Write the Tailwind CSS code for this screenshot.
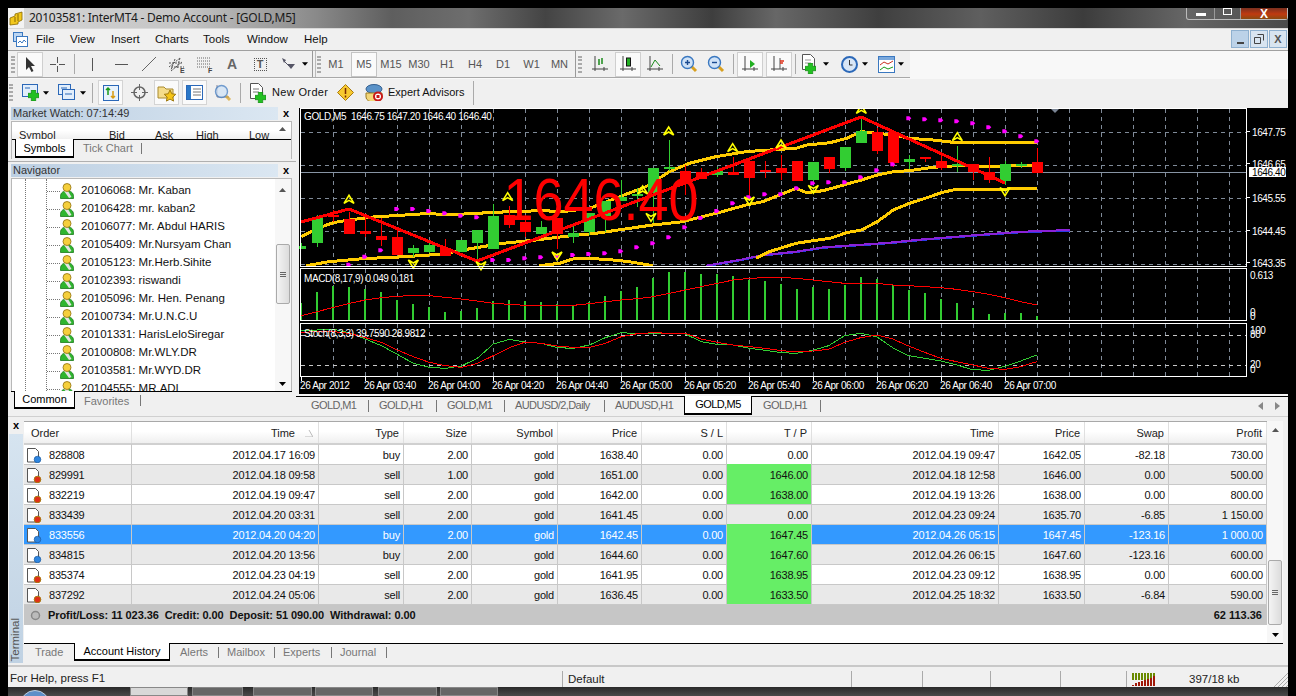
<!DOCTYPE html>
<html lang="en">
<head>
<meta charset="UTF-8">
<title>20103581: InterMT4 - Demo Account - [GOLD,M5]</title>
<script src="https://cdn.jsdelivr.net/npm/@tailwindcss/browser@4"></script>
</head>
<body class="bg-black">
<svg width="0" height="0" class="absolute">
  <defs>
    <symbol id="user" viewBox="0 0 14 16">
      <path d="M.5 15.500c-.5-5 1.500-7.500 6.500-7.500s7 2.500 6.500 7.500z" fill="#2fb52f" stroke="#1c7a1c" stroke-width=".8"/>
      <path d="M4 8l5 7 2.500-1L8 8z" fill="#e4e4e4"/>
      <circle cx="7" cy="4.500" r="4" fill="#f5cf3c" stroke="#8f7010" stroke-width=".8"/>
    </symbol>
    <symbol id="docblue" viewBox="0 0 15 15">
      <path d="M.5.500h8l3 3v10.500h-11z" fill="#fff" stroke="#555"/>
      <circle cx="10.500" cy="11.500" r="3.300" fill="#2f86e0" stroke="#1a5aa0" stroke-width=".7"/>
    </symbol>
    <symbol id="docred" viewBox="0 0 15 15">
      <path d="M.5.500h8l3 3v10.500h-11z" fill="#fff" stroke="#555"/>
      <circle cx="10.500" cy="11.500" r="3.300" fill="#e03018" stroke="#a87a10" stroke-width="1"/>
    </symbol>
    <symbol id="caret" viewBox="0 0 7 4"><path d="M0 0h7L3.500 4z" fill="#000"/></symbol>
    <symbol id="plusgreen" viewBox="0 0 10 10"><path d="M3 0h4v3h3v4H7v3H3V7H0V3h3z" fill="#22c022" stroke="#128012" stroke-width=".6"/></symbol>
    <symbol id="axes" viewBox="0 0 18 18"><path d="M4 1v15M1 14h16M13 12v4" stroke="#444" fill="none"/></symbol>
    <symbol id="lens" viewBox="0 0 18 18"><path d="M11 11l5 5" stroke="#d8a020" stroke-width="3"/><circle cx="7.500" cy="7.500" r="6" fill="#cfe2f7" stroke="#3a78c0" stroke-width="1.400"/></symbol>
  </defs>
</svg>

<div class="w-[1296px] h-[696px] overflow-hidden bg-black pt-[8px] pl-[8px] font-['Liberation_Sans'] text-[11px] leading-none text-black flex flex-col">

  <!-- Title bar -->
  <div class="w-[1280px] h-[21px] shrink-0 flex items-center bg-[linear-gradient(90deg,#d6d6d6_0%,#c4c4c4_14%,#8a8a8a_24%,#5e5e5e_30%,#6e6e6e_36%,#444_42%,#6a6a6a_48%,#3e3e3e_55%,#676767_60%,#3f3f3f_68%,#5f5f5f_76%,#3c3c3c_84%,#666_92%,#4a4a4a_100%)] border-b border-[#d8d8d8] relative">
    <div class="w-[16px] h-[20px] bg-white/70 flex items-center justify-center">
      <svg width="15" height="15" viewBox="0 0 15 15"><path d="M1 7l5-2V3l7-2v8l-4 2v2l-8 1z" fill="#f2c81e" stroke="#8a6a00" stroke-width=".8"/><path d="M6 6v5M9 3v7" stroke="#8a6a00"/></svg>
    </div>
    <span class="ml-[5px] text-[12px] tracking-[-.25px] text-[#1a1a1a] font-['Noto_Sans']">20103581: InterMT4 - Demo Account - [GOLD,M5]</span>
    <div class="absolute right-0 top-0 flex h-[12px] w-[102px] border border-t-0 border-[#bbb] rounded-b-[3px]">
      <div class="w-[28px] flex items-center justify-center border-r border-[#999]"><div class="w-[10px] h-[3px] mt-[2px] bg-white"></div></div>
      <div class="w-[26px] flex items-start justify-center border-r border-[#999]"><div class="w-[9px] h-[7px] border border-white"></div></div>
      <div class="flex-1 flex items-center justify-center bg-[linear-gradient(180deg,#7a3020,#c03a10_55%,#8a4a10)] text-white font-bold text-[12px]">X</div>
    </div>
  </div>

  <!-- Menu bar -->
  <div class="w-[1280px] h-[22px] shrink-0 bg-[#f0f0f0] border-b border-[#a0a0a0] flex items-center relative text-[11.500px] text-[#111]">
    <svg class="ml-[5px]" width="15" height="15" viewBox="0 0 15 15"><rect x=".5" y=".5" width="9" height="9" fill="#bcd6f2" stroke="#3a78c0"/><rect x="3.500" y="4.500" width="11" height="10" fill="#fff" stroke="#3a78c0"/><path d="M5 11l2-2 2 2 2-3 2 2" stroke="#3a78c0" fill="none"/></svg>
    <span class="absolute left-[28px]">File</span>
    <span class="absolute left-[62px]">View</span>
    <span class="absolute left-[103px]">Insert</span>
    <span class="absolute left-[147px]">Charts</span>
    <span class="absolute left-[195px]">Tools</span>
    <span class="absolute left-[239px]">Window</span>
    <span class="absolute left-[296px]">Help</span>
    <div class="absolute right-[1px] top-[1px] flex gap-[1px]">
      <div class="w-[18px] h-[18px] bg-[#bcd2e8] border border-[#8fb0cf] flex items-end justify-center pb-[3px]"><div class="w-[7px] h-[2px] bg-[#444]"></div></div>
      <div class="w-[18px] h-[18px] bg-[#d8e4f0] border border-[#8fb0cf] flex items-center justify-center"><svg width="10" height="10" viewBox="0 0 10 10"><path d="M3.500.5h6v6M.5 3.500h6v6h-6z" fill="none" stroke="#444"/></svg></div>
      <div class="w-[18px] h-[18px] bg-[#d8e4f0] border border-[#8fb0cf] flex items-center justify-center font-bold text-[#555] text-[11px]">X</div>
    </div>
  </div>

  <!-- Toolbar 1 -->
  <div class="w-[1280px] h-[28px] shrink-0 bg-[#f8f8f8] flex">
    <div class="w-[902px] h-[27px] bg-[#f0f0f0] border-b border-[#a8a8a8] flex items-center text-[#555] relative">
      <div class="w-[4px] h-[17px] ml-[3px] mr-[2px] border-x-2 border-dotted border-[#aaa]"></div>
      <div class="w-[26px] h-[25px] bg-[#fafafa] border border-[#cfcfcf] flex items-center justify-center"><svg width="13" height="17" viewBox="0 0 13 17"><path d="M2 1v13l3-3 2.500 5 2-1-2.500-5h4z" fill="#333"/></svg></div>
      <div class="w-[28px] flex items-center justify-center"><svg width="17" height="17" viewBox="0 0 17 17"><path d="M8.500 1v6M8.500 10v6M1 8.500h6M10 8.500h6" stroke="#555"/></svg></div>
      <div class="w-[1px] h-[20px] bg-[#aaa] ml-[3px]"></div>
      <div class="w-[30px] ml-[2px] flex justify-center"><svg width="5" height="13"><path d="M2.500 0v13" stroke="#555"/></svg></div>
      <div class="w-[28px] flex justify-center"><svg width="13" height="5"><path d="M0 2.500h13" stroke="#555"/></svg></div>
      <div class="w-[28px] flex justify-center"><svg width="14" height="14"><path d="M0 14L14 0" stroke="#666"/></svg></div>
      <div class="w-[28px] flex justify-center"><svg width="18" height="17" viewBox="0 0 18 17"><path d="M1 11l11-9M3 15l11-9M1 7h13M3 11h13M7 3L3 14M12 2L9 12" stroke="#555" stroke-dasharray="2 1" fill="none"/><text x="12" y="17" font-size="7" font-weight="700" fill="#444">E</text></svg></div>
      <div class="w-[28px] flex justify-center"><svg width="18" height="17" viewBox="0 0 18 17"><path d="M1 2h14M1 5h14M1 8h14M1 11h14" stroke="#666" stroke-dasharray="1 1"/><text x="12" y="17" font-size="7" font-weight="700" fill="#444">F</text></svg></div>
      <div class="w-[26px] text-center text-[14px] font-bold text-[#666]">A</div>
      <div class="w-[30px] flex justify-center"><div class="w-[13px] h-[13px] border border-dotted border-[#555] flex items-center justify-center font-bold text-[#555]">T</div></div>
      <div class="w-[26px] flex justify-center"><svg width="15" height="14" viewBox="0 0 15 14"><path d="M1 1l4 2-2 3zM6 7h8L10 12z" fill="#556"/><path d="M3 4l5 5" stroke="#556"/></svg></div>
      <svg width="6" height="4" class="ml-[1px]"><use href="#caret"/></svg>
      <div class="w-[1px] h-[26px] bg-[#999] ml-[4px] mr-[2px]"></div>
      <div class="w-[1px] h-[26px] bg-[#bbb] mr-[1px]"></div>
      <div class="w-[4px] h-[17px] border-x-2 border-dotted border-[#aaa]"></div>
      <div class="w-[30px] text-center">M1</div>
      <div class="w-[26px] h-[25px] bg-[#fafafa] border border-[#c4c4c4] flex items-center justify-center">M5</div>
      <div class="w-[28px] text-center">M15</div>
      <div class="w-[28px] text-center">M30</div>
      <div class="w-[28px] text-center">H1</div>
      <div class="w-[28px] text-center">H4</div>
      <div class="w-[28px] text-center">D1</div>
      <div class="w-[29px] text-center">W1</div>
      <div class="w-[27px] text-center">MN</div>
      <div class="w-[1px] h-[26px] bg-[#999] ml-[2px] mr-[2px]"></div>
      <div class="w-[4px] h-[17px] mr-[3px] border-x-2 border-dotted border-[#aaa]"></div>
      <div class="w-[30px] flex justify-center"><svg width="18" height="18" viewBox="0 0 18 18"><use href="#axes"/><path d="M8 4v6M11 3v6" stroke="#1a8a1a" stroke-width="1.500"/></svg></div>
      <div class="w-[26px] h-[25px] bg-[#fafafa] border border-[#cfcfcf] flex items-center justify-center"><svg width="18" height="18" viewBox="0 0 18 18"><use href="#axes"/><rect x="7.500" y="3" width="4" height="8" fill="#22b022" stroke="#111"/></svg></div>
      <div class="w-[28px] flex justify-center"><svg width="18" height="18" viewBox="0 0 18 18"><use href="#axes"/><path d="M5 12l4-7 5 6" stroke="#1a8a1a" fill="none"/></svg></div>
      <div class="w-[1px] h-[20px] bg-[#aaa] mx-[3px]"></div>
      <div class="w-[26px] flex justify-center"><svg width="18" height="18" viewBox="0 0 18 18"><use href="#lens"/><path d="M5 7.500h5M7.500 5v5" stroke="#1a4a90" stroke-width="1.400"/></svg></div>
      <div class="w-[28px] flex justify-center"><svg width="18" height="18" viewBox="0 0 18 18"><use href="#lens"/><path d="M5 7.500h5" stroke="#1a4a90" stroke-width="1.400"/></svg></div>
      <div class="w-[1px] h-[20px] bg-[#aaa] mx-[3px]"></div>
      <div class="w-[26px] h-[25px] bg-[#fafafa] border border-[#cfcfcf] flex items-center justify-center"><svg width="18" height="18" viewBox="0 0 18 18"><use href="#axes"/><path d="M9 5l5 4-5 4z" fill="#22b022"/></svg></div>
      <div class="w-[26px] h-[25px] ml-[3px] bg-[#fafafa] border border-[#cfcfcf] flex items-center justify-center"><svg width="18" height="18" viewBox="0 0 18 18"><use href="#axes"/><path d="M10 3v11" stroke="#555"/><path d="M10 6h4M10 8h3" stroke="#e03018" stroke-width="1.500"/></svg></div>
      <div class="w-[1px] h-[20px] bg-[#aaa] mx-[3px]"></div>
      <div class="relative w-[18px] h-[20px] ml-[3px]"><svg width="13" height="16" viewBox="0 0 13 16"><path d="M.5.5h8l4 4v11H.5z" fill="#fff" stroke="#555"/><path d="M3 6h6M3 9h6" stroke="#999"/></svg><svg class="absolute left-[3px] top-[9px]" width="11" height="11"><use href="#plusgreen"/></svg></div>
      <svg width="6" height="4" class="ml-[3px]"><use href="#caret"/></svg>
      <svg class="ml-[12px]" width="17" height="17" viewBox="0 0 17 17"><circle cx="8.500" cy="8.500" r="7.500" fill="#d8e6f6" stroke="#2b68b8" stroke-width="2"/><path d="M8.500 4v5h3" stroke="#333" fill="none"/></svg>
      <svg width="6" height="4" class="ml-[4px]"><use href="#caret"/></svg>
      <svg class="ml-[10px]" width="17" height="17" viewBox="0 0 17 17"><rect x=".5" y=".5" width="16" height="16" fill="#fff" stroke="#3a78c0"/><rect x="1" y="1" width="15" height="3" fill="#7aa8dc"/><path d="M2 9l4-3 4 2 5-3" stroke="#c83020" fill="none"/><path d="M2 14l4-3 4 2 5-2" stroke="#1a9a1a" fill="none"/></svg>
      <svg width="6" height="4" class="ml-[3px]"><use href="#caret"/></svg>
    </div>
  </div>

  <!-- Toolbar 2 -->
  <div class="w-[1280px] h-[27px] shrink-0 bg-[#f0f0f0] flex items-center">
    <div class="w-[4px] h-[17px] ml-[1px] mr-[9px] border-x-2 border-dotted border-[#aaa]"></div>
    <div class="relative w-[18px] h-[17px] "><svg width="16" height="13" viewBox="0 0 16 13"><rect x=".5" y=".5" width="15" height="12" fill="#e2eefb" stroke="#2b68b8"/><path d="M3 4h5M9 9h4" stroke="#2b68b8"/></svg><svg class="absolute left-[6px] top-[6px]" width="11" height="11"><use href="#plusgreen"/></svg></div>
    <svg width="6" height="4" class="ml-[3px]"><use href="#caret"/></svg>
    <div class="relative w-[18px] h-[17px] ml-[9px]"><svg width="17" height="16" viewBox="0 0 17 16"><rect x=".5" y=".5" width="12" height="10" fill="#e2eefb" stroke="#2b68b8"/><rect x="4.500" y="5.500" width="12" height="10" fill="#e2eefb" stroke="#2b68b8"/><path d="M3 4h6M7 10h7" stroke="#2b68b8"/></svg></div>
    <svg width="6" height="4" class="ml-[4px]"><use href="#caret"/></svg>
    <div class="w-[1px] h-[20px] bg-[#aaa] ml-[6px] mr-[5px]"></div>
    <div class="w-[25px] h-[25px] bg-[#fafafa] border border-[#d4d4d4] flex items-center justify-center"><svg width="16" height="16" viewBox="0 0 16 16"><rect x=".5" y=".5" width="15" height="15" fill="#e8f2fc" stroke="#2b68b8"/><path d="M5 3v7M3 5l2-2 2 2" stroke="#1a9a1a" fill="none" stroke-width="1.500"/><path d="M10 13V6M8 11l2 2 2-2" stroke="#d89a10" fill="none" stroke-width="1.500"/></svg></div>
    <div class="w-[30px] flex justify-center ml-[1px]"><svg width="17" height="17" viewBox="0 0 17 17"><circle cx="8.500" cy="8.500" r="5.500" fill="none" stroke="#666" stroke-width="1.500"/><path d="M8.500 0v6M8.500 11v6M0 8.500h6M11 8.500h6" stroke="#666"/></svg></div>
    <div class="w-[25px] h-[25px] bg-[#fafafa] border border-[#d4d4d4] flex items-center justify-center"><svg width="20" height="18" viewBox="0 0 20 18"><path d="M1 3h6l2 2h7v9H1z" fill="#f5dc8a" stroke="#a88a30"/><path d="M13 6l1.800 3.800 4 .5-3 2.800.8 4-3.600-2-3.600 2 .8-4-3-2.800 4-.5z" fill="#f5c518" stroke="#a07a10"/></svg></div>
    <div class="w-[25px] h-[25px] ml-[3px] bg-[#fafafa] border border-[#d4d4d4] flex items-center justify-center"><svg width="17" height="15" viewBox="0 0 17 15"><rect x=".5" y=".5" width="16" height="14" fill="#fff" stroke="#2b68b8"/><rect x="1" y="1" width="4" height="13" fill="#2b78c8"/><path d="M7 4h8M7 7h8M7 10h8" stroke="#777"/></svg></div>
    <div class="w-[25px] h-[25px] ml-[3px] flex items-center justify-center"><svg width="18" height="18" viewBox="0 0 18 18"><path d="M3 1v12h12" stroke="#889" fill="none"/><use href="#lens" opacity=".7"/></svg></div>
    <div class="w-[1px] h-[20px] bg-[#aaa] ml-[5px]"></div>
    <div class="relative w-[19px] h-[20px] ml-[9px]"><svg width="13" height="16" viewBox="0 0 13 16"><path d="M.5.5h8l4 4v11H.5z" fill="#fff" stroke="#555"/><path d="M3 6h6M3 9h6" stroke="#777"/></svg><svg class="absolute left-[5px] top-[9px]" width="11" height="11"><use href="#plusgreen"/></svg></div>
    <span class="ml-[3px] w-[56px] whitespace-nowrap text-[11px] tracking-[.35px] text-[#111]">New Order</span>
    <svg class="ml-[9px]" width="17" height="17" viewBox="0 0 17 17"><path d="M8.500.5l8 8-8 8-8-8z" fill="#f7c930" stroke="#a87a10"/><path d="M8.500 4v6M8.500 11.500v2" stroke="#7a2a00" stroke-width="1.500"/></svg>
    <svg class="ml-[11px]" width="18" height="17" viewBox="0 0 18 17"><ellipse cx="9" cy="5" rx="8" ry="4.500" fill="#5a92c8" stroke="#335f8f"/><path d="M1 9h16v4a6 4 0 0 1-16 0z" fill="#f3d77a" stroke="#997a20"/><circle cx="13" cy="12.500" r="4" fill="#fff" stroke="#c81818" stroke-width="2"/><rect x="11.500" y="11" width="3" height="3" fill="#c81818"/></svg>
    <span class="ml-[5px] w-[78px] whitespace-nowrap text-[11px] text-[#111]">Expert Advisors</span>
    <div class="w-[1px] h-[24px] bg-[#aaa] ml-[7px]"></div>
  </div>

  <!-- Main row: panels and chart -->
  <div class="flex h-[310px] shrink-0 w-[1280px]">
    <div class="w-[288px] bg-[#f0f0f0] pl-[3px] pt-[1px] flex flex-col">
      <!-- Market Watch -->
      <div class="h-[13px] flex items-center w-[278px]">
        <div class="w-[268px] h-[13px] flex items-center pl-[2px] bg-[linear-gradient(90deg,#bccfe2,#dbe7f2)] text-[#333]">Market Watch: 07:14:49</div>
        <span class="ml-[5px] font-bold text-[11px]">x</span>
      </div>
      <div class="mt-[1px] h-[38px] w-[281px] border-x border-t border-[#b8b8b8] flex flex-col relative">
        <div class="h-[17px] bg-[linear-gradient(180deg,#fff_50%,#f0f0f0)] overflow-hidden relative">
          <span class="absolute left-[7px] top-[8px] text-[#222]">Symbol</span>
          <span class="absolute left-[97px] top-[8px] text-[#222]">Bid</span>
          <span class="absolute left-[143px] top-[8px] text-[#222]">Ask</span>
          <span class="absolute left-[184px] top-[8px] text-[#222]">High</span>
          <span class="absolute left-[237px] top-[8px] text-[#222]">Low</span>
          <svg class="absolute right-[5px] top-[5px]" width="7" height="4" viewBox="0 0 7 4"><path d="M0 4h7L3.500 0z" fill="#555"/></svg>
        </div>
        <div class="flex-1 border-t border-black bg-[#f0f0f0] flex relative">
          <div class="w-[59px] ml-[3px] h-[19px] -mt-[1px] pt-[1px] bg-white border-x border-b-2 border-black flex items-center justify-center">Symbols</div>
          <span class="absolute left-[71px] top-[3px] text-[#777]">Tick Chart</span>
          <div class="absolute left-[129px] top-[3px] w-[1px] h-[11px] bg-[#777]"></div>
        </div>
      </div>
      <div class="h-[1px] -ml-[3px] mt-[2px] bg-[#b0b0b0]"></div>
      <!-- Navigator -->
      <div class="h-[13px] mt-[2px] flex items-center w-[278px]">
        <div class="w-[268px] h-[13px] flex items-center pl-[2px] bg-[linear-gradient(90deg,#bccfe2,#dbe7f2)] text-[#333]">Navigator</div>
        <span class="ml-[5px] font-bold text-[11px]">x</span>
      </div>
      <div class="mt-[1px] h-[213px] w-[281px] bg-white border-x border-t border-[#b8b8b8] relative overflow-hidden text-[11.500px] text-[#111]">
        <div class="absolute left-[13px] top-0 bottom-0 border-l border-dotted border-[#777]"></div>
        <div class="absolute left-[34px] top-0 bottom-0 border-l border-dotted border-[#777]"></div>
        <div class="absolute left-0 top-[3px] w-[264px] flex flex-col [&>div]:h-[18px] [&>div]:flex [&>div]:items-center [&>div]:pl-[35px]">
          <div><span class="w-[13px] border-t border-dotted border-[#777]"></span><svg width="14" height="16"><use href="#user"/></svg><span class="ml-[7px] whitespace-nowrap">20106068: Mr. Kaban</span></div>
          <div><span class="w-[13px] border-t border-dotted border-[#777]"></span><svg width="14" height="16"><use href="#user"/></svg><span class="ml-[7px] whitespace-nowrap">20106428: mr. kaban2</span></div>
          <div><span class="w-[13px] border-t border-dotted border-[#777]"></span><svg width="14" height="16"><use href="#user"/></svg><span class="ml-[7px] whitespace-nowrap">20106077: Mr. Abdul HARIS</span></div>
          <div><span class="w-[13px] border-t border-dotted border-[#777]"></span><svg width="14" height="16"><use href="#user"/></svg><span class="ml-[7px] whitespace-nowrap">20105409: Mr.Nursyam Chan</span></div>
          <div><span class="w-[13px] border-t border-dotted border-[#777]"></span><svg width="14" height="16"><use href="#user"/></svg><span class="ml-[7px] whitespace-nowrap">20105123: Mr.Herb.Sihite</span></div>
          <div><span class="w-[13px] border-t border-dotted border-[#777]"></span><svg width="14" height="16"><use href="#user"/></svg><span class="ml-[7px] whitespace-nowrap">20102393: riswandi</span></div>
          <div><span class="w-[13px] border-t border-dotted border-[#777]"></span><svg width="14" height="16"><use href="#user"/></svg><span class="ml-[7px] whitespace-nowrap">20105096: Mr. Hen. Penang</span></div>
          <div><span class="w-[13px] border-t border-dotted border-[#777]"></span><svg width="14" height="16"><use href="#user"/></svg><span class="ml-[7px] whitespace-nowrap">20100734: Mr.U.N.C.U</span></div>
          <div><span class="w-[13px] border-t border-dotted border-[#777]"></span><svg width="14" height="16"><use href="#user"/></svg><span class="ml-[7px] whitespace-nowrap">20101331: HarisLeloSiregar</span></div>
          <div><span class="w-[13px] border-t border-dotted border-[#777]"></span><svg width="14" height="16"><use href="#user"/></svg><span class="ml-[7px] whitespace-nowrap">20100808: Mr.WLY.DR</span></div>
          <div><span class="w-[13px] border-t border-dotted border-[#777]"></span><svg width="14" height="16"><use href="#user"/></svg><span class="ml-[7px] whitespace-nowrap">20103581: Mr.WYD.DR</span></div>
          <div><span class="w-[13px] border-t border-dotted border-[#777]"></span><svg width="14" height="16"><use href="#user"/></svg><span class="ml-[7px] whitespace-nowrap">20104555: MR.ADI</span></div>
        </div>
        <!-- Navigator scrollbar -->
        <div class="absolute right-0 top-0 bottom-0 w-[16px] bg-[#f7f7f7]">
          <svg class="absolute left-[4px] top-[9px]" width="7" height="4" viewBox="0 0 7 4"><path d="M0 4h7L3.500 0z" fill="#555"/></svg>
          <div class="absolute left-[1px] top-[65px] w-[14px] h-[60px] bg-[linear-gradient(90deg,#f4f4f4,#dcdcdc)] border border-[#aaa] rounded-[2px] flex flex-col items-center justify-center gap-[1px]">
            <div class="w-[6px] h-[1px] bg-[#666]"></div><div class="w-[6px] h-[1px] bg-[#666]"></div><div class="w-[6px] h-[1px] bg-[#666]"></div>
          </div>
          <svg class="absolute left-[4px] top-[203px]" width="7" height="4"><use href="#caret"/></svg>
        </div>
      </div>
      <div class="h-[22px] w-[281px] border-t border-black bg-[#f0f0f0] relative z-10">
        <div class="w-[61px] ml-[3px] h-[18px] -mt-[1px] bg-white border-x border-b-2 border-black flex items-center justify-center">Common</div>
        <span class="absolute left-[73px] top-[4px] text-[#777]">Favorites</span>
        <div class="absolute left-[129px] top-[3px] w-[1px] h-[11px] bg-[#777]"></div>
      </div>
    </div>

    <!-- Chart column -->
    <div class="flex-1 flex flex-col bg-[#f0f0f0]">
      <div class="h-[2px]"></div>
      <div class="h-[286px] ml-[3px] bg-black">
        <svg id="chart" class="block" width="989" height="286" viewBox="299 108 989 286"></svg>
      </div>
      <div class="h-[2px] bg-[#f4f4f4]"></div>
      <div class="h-[20px] bg-[#f0f0f0] border-t border-black relative text-[11px] tracking-[-.6px] text-[#666]">
        <span class="absolute left-[15px] top-[3px]">GOLD,M1</span>
        <div class="absolute left-[72px] top-[3px] w-[1px] h-[12px] bg-[#777]"></div>
        <span class="absolute left-[83px] top-[3px]">GOLD,H1</span>
        <div class="absolute left-[140px] top-[3px] w-[1px] h-[12px] bg-[#777]"></div>
        <span class="absolute left-[151px] top-[3px]">GOLD,M1</span>
        <div class="absolute left-[208px] top-[3px] w-[1px] h-[12px] bg-[#777]"></div>
        <span class="absolute left-[219px] top-[3px]">AUDUSD/2,Daily</span>
        <div class="absolute left-[308px] top-[3px] w-[1px] h-[12px] bg-[#777]"></div>
        <span class="absolute left-[319px] top-[3px]">AUDUSD,H1</span>
        <div class="absolute left-[388px] -top-[1px] w-[68px] h-[19px] bg-white border-x border-b-2 border-black flex items-center justify-center text-black">GOLD,M5</div>
        <span class="absolute left-[467px] top-[3px]">GOLD,H1</span>
        <div class="absolute left-[524px] top-[3px] w-[1px] h-[12px] bg-[#777]"></div>
        <svg class="absolute left-[962px] top-[5px]" width="5" height="8" viewBox="0 0 5 8"><path d="M5 0v8L0 4z" fill="#888"/></svg>
        <svg class="absolute left-[979px] top-[5px]" width="5" height="8" viewBox="0 0 5 8"><path d="M0 0v8l5-4z" fill="#888"/></svg>
      </div>
    </div>
  </div>

  <!-- Terminal -->
  <div class="w-[1280px] h-[249px] shrink-0 bg-[#f0f0f0] flex border-t border-[#d0d0d0]">
    <div class="w-[16px] flex flex-col items-center bg-[#f0f0f0]">
      <span class="font-bold mt-[3px] h-[12px]">x</span>
      <div class="mt-[2px] flex-1 w-[14px] mb-[2px] bg-[linear-gradient(180deg,#d6e4f0,#c0d2e3)] flex items-end justify-center pb-[2px]">
        <span class="[writing-mode:vertical-rl] rotate-180 text-[#555] text-[11.500px]">Terminal</span>
      </div>
    </div>
    <div class="flex-1 flex flex-col">
      <div class="h-[223px] bg-white relative mt-[4px] border-b border-black w-[1259px]">
        <!-- Header -->
        <div class="grid grid-cols-[108px_187px_85px_68px_86px_84px_85px_85px_187px_86px_84px_98px] w-[1243px] h-[24px] border-t border-[#a8a8a8] bg-[linear-gradient(180deg,#fff_45%,#efefef)] border-b-2 border-b-[#d0d0d0] text-[#222] [&>div]:border-r [&>div]:border-[#e0e0e0] [&>div]:text-right [&>div]:pr-[4px] [&>div]:pt-[6px]">
          <div class="!text-left pl-[7px]">Order</div>
          <div class="relative !pr-[23px]">Time<svg class="absolute right-[5px] top-[8px]" width="8" height="7" viewBox="0 0 8 7"><path d="M0 7h8L4 0" fill="none" stroke="#bbb"/></svg></div>
          <div>Type</div><div>Size</div><div>Symbol</div><div>Price</div><div class="!pr-[3px]">S / L</div><div>T / P</div><div>Time</div><div>Price</div><div>Swap</div><div>Profit</div>
        </div>
        <!-- Rows -->
        <div class="w-[1243px] text-[#111] tracking-[-.2px] [&>div]:grid [&>div]:grid-cols-[108px_187px_85px_68px_86px_84px_85px_85px_187px_86px_84px_98px] [&>div]:h-[20px] [&>div]:border-b [&>div]:border-[#c8c8c8] [&_.c]:h-[20px] [&_.c]:border-r [&_.c]:border-[#c8c8c8] [&_.c]:text-right [&_.c]:pr-[3px] [&_.c]:pt-[6px] [&_.c]:-mt-[1px] [&_.o]:h-[20px] [&_.o]:border-r [&_.o]:border-[#c8c8c8] [&_.o]:flex [&_.o]:items-center [&_.o]:pl-[3px] [&_.o]:pt-[2px] [&_.o]:-mt-[1px]">
          <div class="bg-white"><div class="o"><svg width="15" height="15"><use href="#docblue"/></svg><span class="ml-[7px]">828808</span></div><div class="c">2012.04.17 16:09</div><div class="c">buy</div><div class="c">2.00</div><div class="c">gold</div><div class="c">1638.40</div><div class="c">0.00</div><div class="c">0.00</div><div class="c">2012.04.19 09:47</div><div class="c">1642.05</div><div class="c">-82.18</div><div class="c">730.00</div></div>
          <div class="bg-[#e9e9e9]"><div class="o"><svg width="15" height="15"><use href="#docred"/></svg><span class="ml-[7px]">829991</span></div><div class="c">2012.04.18 09:58</div><div class="c">sell</div><div class="c">1.00</div><div class="c">gold</div><div class="c">1651.00</div><div class="c">0.00</div><div class="c bg-[#66ee66]">1646.00</div><div class="c">2012.04.18 12:58</div><div class="c">1646.00</div><div class="c">0.00</div><div class="c">500.00</div></div>
          <div class="bg-white"><div class="o"><svg width="15" height="15"><use href="#docred"/></svg><span class="ml-[7px]">832219</span></div><div class="c">2012.04.19 09:47</div><div class="c">sell</div><div class="c">2.00</div><div class="c">gold</div><div class="c">1642.00</div><div class="c">0.00</div><div class="c bg-[#66ee66]">1638.00</div><div class="c">2012.04.19 13:26</div><div class="c">1638.00</div><div class="c">0.00</div><div class="c">800.00</div></div>
          <div class="bg-[#e9e9e9]"><div class="o"><svg width="15" height="15"><use href="#docred"/></svg><span class="ml-[7px]">833439</span></div><div class="c">2012.04.20 03:31</div><div class="c">sell</div><div class="c">2.00</div><div class="c">gold</div><div class="c">1641.45</div><div class="c">0.00</div><div class="c">0.00</div><div class="c">2012.04.23 09:24</div><div class="c">1635.70</div><div class="c">-6.85</div><div class="c">1 150.00</div></div>
          <div class="bg-[#3399ff] text-white"><div class="o"><svg width="15" height="15"><use href="#docblue"/></svg><span class="ml-[7px]">833556</span></div><div class="c">2012.04.20 04:20</div><div class="c">buy</div><div class="c">2.00</div><div class="c">gold</div><div class="c">1642.45</div><div class="c">0.00</div><div class="c bg-[#66ee66] text-[#111]">1647.45</div><div class="c">2012.04.26 05:15</div><div class="c">1647.45</div><div class="c">-123.16</div><div class="c">1 000.00</div></div>
          <div class="bg-[#e9e9e9]"><div class="o"><svg width="15" height="15"><use href="#docblue"/></svg><span class="ml-[7px]">834815</span></div><div class="c">2012.04.20 13:56</div><div class="c">buy</div><div class="c">2.00</div><div class="c">gold</div><div class="c">1644.60</div><div class="c">0.00</div><div class="c bg-[#66ee66]">1647.60</div><div class="c">2012.04.26 06:15</div><div class="c">1647.60</div><div class="c">-123.16</div><div class="c">600.00</div></div>
          <div class="bg-white"><div class="o"><svg width="15" height="15"><use href="#docred"/></svg><span class="ml-[7px]">835374</span></div><div class="c">2012.04.23 04:19</div><div class="c">sell</div><div class="c">2.00</div><div class="c">gold</div><div class="c">1641.95</div><div class="c">0.00</div><div class="c bg-[#66ee66]">1638.95</div><div class="c">2012.04.23 09:12</div><div class="c">1638.95</div><div class="c">0.00</div><div class="c">600.00</div></div>
          <div class="bg-[#e9e9e9]"><div class="o"><svg width="15" height="15"><use href="#docred"/></svg><span class="ml-[7px]">837292</span></div><div class="c">2012.04.24 05:06</div><div class="c">sell</div><div class="c">2.00</div><div class="c">gold</div><div class="c">1636.45</div><div class="c">0.00</div><div class="c bg-[#66ee66]">1633.50</div><div class="c">2012.04.25 18:32</div><div class="c">1633.50</div><div class="c">-6.84</div><div class="c">590.00</div></div>
        </div>
        <!-- Summary -->
        <div class="w-[1243px] h-[20px] bg-[#c6c6c6] flex items-center font-bold text-[#111]">
          <svg class="ml-[6px]" width="11" height="11" viewBox="0 0 11 11"><circle cx="5.500" cy="5.500" r="4" fill="#bbb" stroke="#888" stroke-width="1.500"/></svg>
          <span class="ml-[7px] whitespace-pre tracking-[-.08px]">Profit/Loss: 11 023.36  Credit: 0.00  Deposit: 51 090.00  Withdrawal: 0.00</span>
          <span class="ml-auto pr-[5px]">62 113.36</span>
        </div>
        <!-- Terminal scrollbar -->
        <div class="absolute right-0 top-0 bottom-0 w-[16px] bg-[#f7f7f7]">
          <svg class="absolute left-[5px] top-[7px]" width="7" height="4" viewBox="0 0 7 4"><path d="M0 4h7L3.500 0z" fill="#555"/></svg>
          <div class="absolute left-[1px] top-[139px] w-[14px] h-[65px] bg-[linear-gradient(90deg,#f4f4f4,#dcdcdc)] border border-[#aaa] rounded-[2px] flex flex-col items-center justify-center gap-[1px]">
            <div class="w-[6px] h-[1px] bg-[#666]"></div><div class="w-[6px] h-[1px] bg-[#666]"></div><div class="w-[6px] h-[1px] bg-[#666]"></div>
          </div>
          <svg class="absolute left-[5px] top-[212px]" width="7" height="4"><use href="#caret"/></svg>
        </div>
      </div>
      <!-- Terminal tabs -->
      <div class="h-[21px] relative text-[#777] text-[11px]">
        <span class="absolute left-[11px] top-[3px]">Trade</span>
        <div class="absolute left-[50px] -top-[1px] w-[96px] h-[18px] bg-white border-x border-b-2 border-black flex items-center justify-center text-black">Account History</div>
        <span class="absolute left-[156px] top-[3px]">Alerts</span>
        <div class="absolute left-[194px] top-[3px] w-[1px] h-[11px] bg-[#777]"></div>
        <span class="absolute left-[203px] top-[3px]">Mailbox</span>
        <div class="absolute left-[250px] top-[3px] w-[1px] h-[11px] bg-[#777]"></div>
        <span class="absolute left-[259px] top-[3px]">Experts</span>
        <div class="absolute left-[307px] top-[3px] w-[1px] h-[11px] bg-[#777]"></div>
        <span class="absolute left-[316px] top-[3px]">Journal</span>
        <div class="absolute left-[362px] top-[3px] w-[1px] h-[11px] bg-[#777]"></div>
      </div>
    </div>
  </div>

  <!-- Status bar -->
  <div class="w-[1280px] h-[22px] shrink-0 bg-[#f0f0f0] border-t-2 border-[#c8c8c8] flex items-center relative text-[#222] text-[11.500px]">
    <span class="ml-[2px] mt-[4px]">For Help, press F1</span>
    <div class="absolute left-[554px] top-[4px] w-[1px] h-[16px] bg-[#aaa]"></div>
    <span class="absolute left-[560px] top-[7px]">Default</span>
    <div class="absolute left-[843px] top-[4px] w-[1px] h-[16px] bg-[#aaa]"></div>
    <div class="absolute left-[914px] top-[4px] w-[1px] h-[16px] bg-[#aaa]"></div>
    <div class="absolute left-[982px] top-[4px] w-[1px] h-[16px] bg-[#aaa]"></div>
    <div class="absolute left-[1052px] top-[4px] w-[1px] h-[16px] bg-[#aaa]"></div>
    <div class="absolute left-[1118px] top-[4px] w-[1px] h-[16px] bg-[#aaa]"></div>
    <svg class="absolute left-[1124px] top-[6px]" width="24" height="13" viewBox="0 0 24 13">
      <path d="M1 0v13M4 0v13M7 0v13M10 0v13M13 0v13M16 0v13M19 0v13M22 0v13" stroke="#6a8a00" stroke-width="2" stroke-dasharray="7 6"/>
      <path d="M1 12v1M4 10v3M7 9v4M10 8v5M13 7v6M16 6v7M19 5v8M22 3v10" stroke="#a01808" stroke-width="2"/>
    </svg>
    <span class="absolute left-[1181px] top-[7px]">397/18 kb</span>
    <svg class="absolute right-0 bottom-0" width="16" height="16" viewBox="0 0 16 16"><path d="M16 2L2 16M16 6L6 16M16 10L10 16M16 14l-2 2" stroke="#aaa"/></svg>
  </div>

  <!-- Desktop taskbar peeking in at the bottom -->
  <div class="w-[1280px] h-[9px] shrink-0 bg-[linear-gradient(180deg,#2a2a2a,#4a4a4a)] relative overflow-hidden">
    <div class="absolute left-[12px] top-[3px] w-[30px] h-[30px] rounded-full bg-[#5d8fc8] border border-[#bcd]"></div>
    <div class="absolute left-[122px] top-0 w-[58px] h-[9px] bg-[#d8d8d8] border border-[#888]"></div>
    <div class="absolute left-[184px] top-0 w-[51px] h-[9px] bg-[#666] border border-[#888]"></div>
    <div class="absolute left-[245px] top-0 w-[59px] h-[9px] bg-[#666] border border-[#888]"></div>
    <div class="absolute left-[307px] top-0 w-[58px] h-[9px] bg-[#666] border border-[#888]"></div>
    <div class="absolute left-[370px] top-0 w-[59px] h-[9px] bg-[#666] border border-[#888]"></div>
    <div class="absolute left-[432px] top-0 w-[58px] h-[9px] bg-[#666] border border-[#888]"></div>
  </div>
</div>

<script>
// chart data, all coordinates in page pixels
const svg = document.getElementById('chart');
const Z = v => 100 + v / 3;      // y of the price-pane crops
const Zs = v => 265 + v / 3;     // y of the indicator crops
let out = '';

const line = (x1, y1, x2, y2, c, extra = '') =>
  `<line x1="${x1}" y1="${y1}" x2="${x2}" y2="${y2}" stroke="${c}" shape-rendering="crispEdges" ${extra}/>`;
const poly = (pts, c, w) =>
  `<polyline fill="none" stroke="${c}" stroke-width="${w}" stroke-linejoin="round" shape-rendering="crispEdges" points="${pts.map(p => p.join(',')).join(' ')}"/>`;
const text = (x, y, s, c = '#fff', extra = '') =>
  `<text x="${x}" y="${y}" fill="${c}" font-family="Liberation Sans" font-size="10" letter-spacing="-.4" ${extra}>${s}</text>`;

// grid
const dash = 'stroke-dasharray="4 4"', grid = '#7f8a98';
for (let x = 333; x < 1240; x += 32) {
  out += line(x + .5, 109, x + .5, 266, grid, dash);
  out += line(x + .5, 269, x + .5, 320, grid, dash);
  out += line(x + .5, 324, x + .5, 376, grid, dash);
}
[132, 165, 198, 231, 264].forEach(y => out += line(301, y + .5, 1246, y + .5, grid, dash));
[335, 365].forEach(y => out += line(301, y + .5, 1246, y + .5, '#c8c8c8', dash));
out += line(301, 320.5, 1246, 320.5, '#c8c8c8', dash);
out += line(301, 376.5, 1246, 376.5, '#c8c8c8', dash);
out += line(301, 172.5, 1246, 172.5, '#8794a4');

// price candles: colour, body top, body bottom, wick top, wick bottom (crop units)
const C = [
 ['g',438,447,430,447],['g',354,428,346,440],['r',345,348,330,365],['r',358,402,335,402],['r',394,401,345,410],
 ['r',408,420,355,438],['r',411,465,390,465],['g',444,459,435,470],['g',435,456,425,460],['r',444,467,418,467],
 ['g',420,456,420,456],['g',390,429,390,482],['g',348,447,313,447],['r',345,375,318,385],['r',366,396,345,410],
 ['g',381,402,363,402],['r',354,402,354,447],['g',399,411,372,430],['g',339,396,339,405],['g',303,348,303,396],
 ['g',291,303,240,303],['g',282,288,265,320],['g',204,279,204,370],['g',201,204,120,212],['r',213,240,195,285],
 ['r',216,237,205,237],['g',213,224,200,230],['r',216,224,170,224],['r',183,234,175,290],['r',210,214,183,234],
 ['r',204,219,165,240],['r',183,243,183,243],['g',186,240,186,258],['r',171,207,171,218],['g',141,204,141,212],
 ['g',93,129,55,129],['r',96,153,85,162],['r',96,189,96,200],['g',177,186,165,208],['r',171,177,171,186],
 ['r',183,205,165,210],['g',193,197,138,215],['r',192,216,192,240],['r',216,240,171,250],['g',192,243,183,255],
 ['g',192,197,185,205],['r',186,219,144,219]
];

// moving averages and envelopes
const z4 = a => a.map(([x, y]) => [296 + x / 3, Z(y)]);
const z5 = a => a.map(([x, y]) => [790 + x / 3, Z(y)]);
const purple = [...z4([[1230,497],[1330,480],[1400,465],[1500,455]]), ...z5([[100,442],[200,435],[300,428],[400,418],[500,410],[600,402],[700,395],[840,390]])];
out += poly(purple.map(([x, y]) => [x, y + 1]), '#2a3ae0', 1) + poly(purple, '#8a22d8', 2);
const gold = '#ffcc00';
out += poly([...z4([[16,410],[64,385],[112,368],[160,360],[240,350],[300,347],[400,340],[450,345],[540,340],[640,335],[740,332],[800,335],[880,325],[1050,260],[1120,215],[1180,190],[1260,170],[1350,155],[1450,148],[1500,145]]), ...z5([[50,135],[120,128],[170,115],[214,95],[262,100],[310,105],[358,115],[430,120],[490,127],[742,127]])], gold, 3);
out += poly([...z4([[30,497],[100,485],[200,476],[330,470],[440,462],[500,450],[620,430],[720,420],[800,410],[900,400],[1000,385],[1070,375],[1160,365],[1260,340],[1350,315],[1400,305],[1500,265]]), ...z5([[50,278],[100,272],[150,258],[214,240],[262,225],[310,215],[358,212],[406,205],[454,200],[502,197],[550,197],[598,200],[646,197],[742,197]])], gold, 3);
out += poly(z4([[730,497],[790,490],[830,477],[880,475],[950,480],[1000,485],[1070,497]]), gold, 3);
out += poly([...z4([[1380,475],[1420,455],[1500,430]]), ...z5([[50,425],[120,415],[170,398],[214,390],[262,365],[310,330],[358,310],[406,295],[454,278],[502,267],[574,267],[622,270],[670,265],[742,265]])], gold, 3);

// candles over the averages
C.forEach((c, k) => {
  const x = 301 + 16 * k, col = c[0] === 'g' ? '#32cd32' : '#ff0000';
  out += `<rect x="${x}" y="${Z(c[3])}" width="1" height="${(c[4] - c[3]) / 3}" fill="${col}" shape-rendering="crispEdges"/>`;
  const bx = k === 0 ? 299 : x - 5;
  out += `<rect x="${bx}" y="${Z(c[1])}" width="${k === 0 ? 7 : 11}" height="${Math.max((c[2] - c[1]) / 3, 2)}" fill="${col}" shape-rendering="crispEdges"/>`;
});

// zigzag
out += poly([[301,222],[349,209],[477,261],[861,117],[1005,183]], '#ff0000', 3);

// magenta dots
const dots = [...z4([[208,470],[304,327],[352,327],[400,333],[448,340],[496,347],[544,352],[256,451],[160,494],[592,480],[640,480],[688,475],[736,472],[784,468],[832,465],[880,462],[928,460],[976,454],[1024,442],[1072,430],[1120,412],[1168,382],[1216,354],[1264,333],[1312,310],[1360,292],[1408,283],[1456,283]]),
  ...z5([[22,265],[70,250],[118,247],[166,247],[214,232],[262,211],[310,193],[358,55],[406,58],[454,61],[502,64],[550,70],[598,82],[646,94],[694,109],[742,124]])];
dots.forEach(([x, y]) => out += `<path d="M${x - 3} ${y - 2}h3l2 2-2 2h-3z" fill="#ff00ff"/>`);

// fractal arrows
const up = ([x, y]) => `<path d="M${x - 5} ${y + 4}L${x} ${y - 4}L${x + 5} ${y + 4}L${x} ${y + 1}z" fill="none" stroke="#ffff00" stroke-width="1.600"/>`;
const down = ([x, y]) => `<path d="M${x - 5} ${y - 4}L${x} ${y + 4}L${x + 5} ${y - 4}L${x} ${y - 1}z" fill="none" stroke="#ffff00" stroke-width="1.600"/>`;
[...z4([[159,298],[635,290],[1118,93],[1310,143],[1455,132],[1040,270]]), ...z5([[214,28],[502,110]])].forEach(p => out += up(p));
[...z4([[352,492],[555,497],[783,468],[1065,352],[1360,303]]), ...z5([[70,268],[645,275]])].forEach(p => out += down(p));

// big bid label
out += `<text transform="translate(503.500 220) scale(1 1.080)" fill="#ff0000" font-family="Liberation Sans" font-size="54">1646.40</text>`;
out += `<path d="M1050 108h10l-5 5z" fill="#7a8494"/>`;

// MACD
const tops = [115,82,63,67,72,82,106,118,125,141,138,129,107,105,107,111,118,122,112,93,78,66,39,22,20,27,27,33,45,48,57,72,66,72,60,36,42,60,75,84,102,114,129,147,143,144,153];
tops.forEach((t, k) => out += `<rect x="${300 + 16 * k}" y="${Zs(t)}" width="2" height="${(166 - t) / 3}" fill="#32cd32" shape-rendering="crispEdges"/>`);
const zs6 = a => a.map(([x, y]) => [296 + x / 3, Zs(y)]);
const zs7 = a => a.map(([x, y]) => [790 + x / 3, Zs(y)]);
out += poly([...zs6([[16,152],[64,140],[112,127],[160,115],[208,105],[256,98],[304,94],[352,91],[400,92],[448,97],[496,102],[544,108],[592,115],[640,118],[688,121],[736,121],[784,121],[832,121],[880,116],[928,110],[976,105],[1024,101],[1072,95],[1120,85],[1168,75],[1216,65],[1264,55],[1312,45],[1360,40],[1408,38],[1456,37],[1500,40]]), ...zs7([[68,45],[116,50],[164,55],[260,55],[308,60],[356,62],[404,65],[452,68],[500,73],[548,80],[596,88],[644,98],[692,110],[740,120]])], '#ff0000', 1);

// Stochastic
out += poly([...zs6([[16,197],[64,195],[112,193],[160,203],[208,222],[256,242],[304,268],[352,295],[400,307],[448,310],[496,303],[544,280],[592,237],[640,223],[688,231],[736,235],[784,248],[832,250],[880,240],[928,218],[976,203],[1024,206],[1072,204],[1120,206],[1168,207],[1216,230],[1264,238],[1312,240],[1360,250],[1408,256],[1456,263],[1500,265]]), ...zs7([[68,256],[116,242],[164,212],[212,205],[260,215],[308,248],[356,272],[404,280],[452,288],[500,300],[548,314],[596,316],[644,304],[692,288],[740,270]])], '#32cd32', 1);
out += poly([...zs6([[16,202],[64,200],[112,200],[160,205],[208,218],[256,232],[304,255],[352,275],[400,292],[448,302],[496,307],[544,295],[592,272],[640,248],[688,231],[736,235],[784,243],[832,247],[880,247],[928,235],[976,215],[1024,206],[1072,203],[1120,205],[1168,205],[1216,222],[1264,232],[1312,240],[1360,245],[1408,250],[1456,257],[1500,260]]), ...zs7([[68,258],[116,253],[164,232],[212,218],[260,210],[308,222],[356,243],[404,262],[452,280],[500,290],[548,300],[596,310],[644,313],[692,305],[740,290]])], '#ff0000', 1);

// pane frames
[[300.5,108.5,946,158],[300.5,268.5,946,52],[300.5,323.5,946,53]].forEach(([x, y, w, h]) =>
  out += `<rect x="${x}" y="${y}" width="${w}" height="${h}" fill="none" stroke="#fff" shape-rendering="crispEdges"/>`);

// labels
out += text(304, 120, 'GOLD,M5  1646.75 1647.20 1646.40 1646.40', '#fff', 'xml:space="preserve"');
out += text(304, 282, 'MACD(8,17,9) 0.049 0.181');
out += text(304, 337, 'Stoch(8,3,3) 39.7590 28.9812');
[[1647.75,136],[1646.65,168],[1645.55,202],[1644.45,235],[1643.35,267]].forEach(([v, y]) => {
  out += text(1252, y, v.toFixed(2));
  out += line(1247, y - 4.500, 1250, y - 4.500, '#fff');
});
out += `<rect x="1249" y="167" width="37" height="10" fill="#fff"/>` + text(1252, 176, '1646.40', '#000');
out += text(1250, 279, '0.613') + text(1250, 320, '0') + text(1250, 316, '0');
out += text(1250, 334, '100') + text(1250, 338, '80') + text(1250, 368, '20') + text(1250, 373, '0');

// time axis
['26 Apr 2012','26 Apr 03:40','26 Apr 04:00','26 Apr 04:20','26 Apr 04:40','26 Apr 05:00','26 Apr 05:20','26 Apr 05:40','26 Apr 06:00','26 Apr 06:20','26 Apr 06:40','26 Apr 07:00'].forEach((s, k) => {
  const x = 300 + 64 * k;
  out += text(x, 389, s);
  out += line(x + 1.500, 377, x + 1.500, 381, '#fff');
});

svg.innerHTML = out;
</script>
</body>
</html>
